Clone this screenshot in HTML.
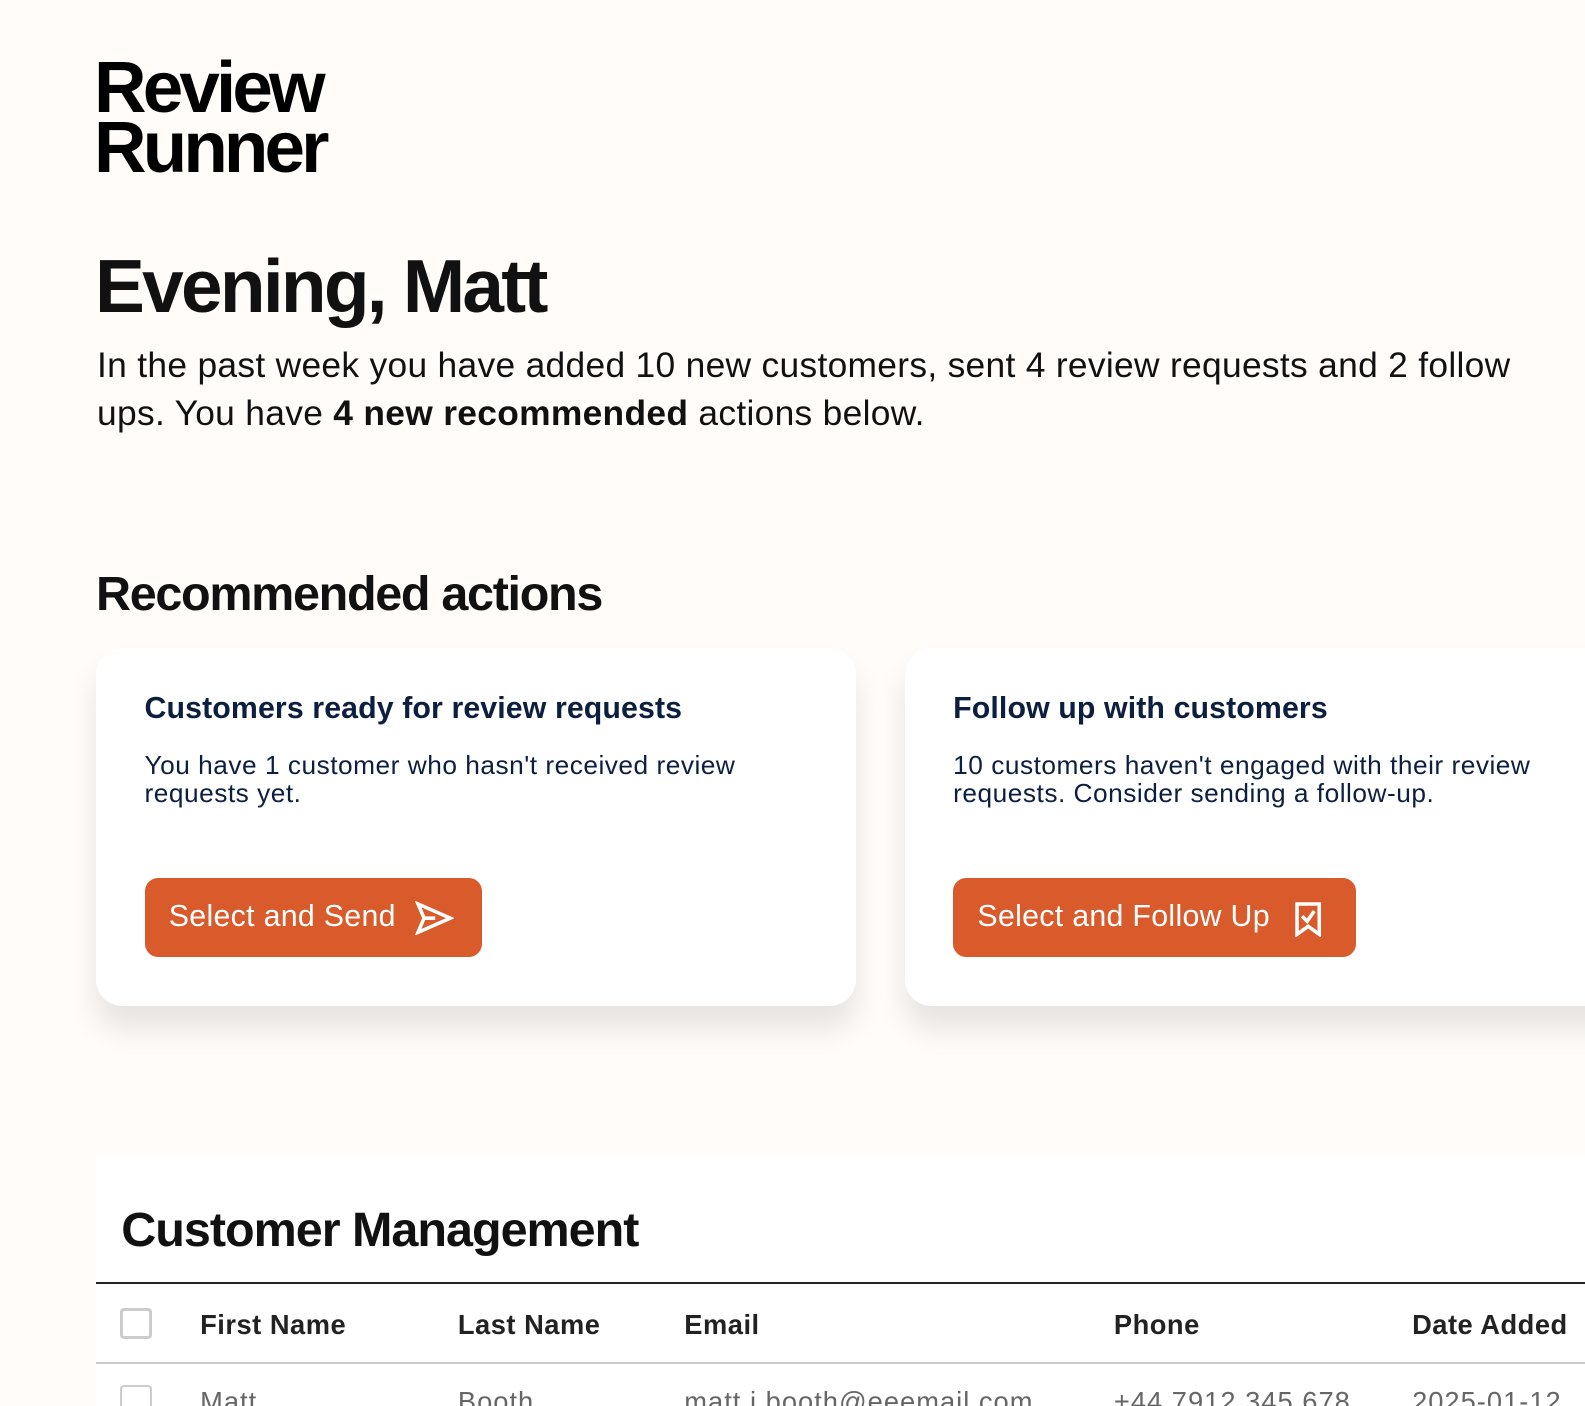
<!DOCTYPE html>
<html><head><meta charset="utf-8"><style>
*{margin:0;padding:0;box-sizing:border-box}
html,body{width:1585px;height:1406px;overflow:hidden;background:#fffcf9}
#w{position:relative;width:1570px;height:1400px;zoom:1.0108;font-family:"Liberation Sans",sans-serif;color:#111}
.a{position:absolute;white-space:nowrap}
.logo{left:93px;top:57px;font-size:72px;font-weight:bold;line-height:60px;letter-spacing:-3.8px;color:#000}
.h1{left:94px;top:240px;font-size:74px;font-weight:bold;letter-spacing:-2.7px;color:#111}
.p{left:96px;top:338px;font-size:35px;line-height:48px;color:#111;letter-spacing:0.3px}
.h2{left:95px;top:560px;font-size:48px;font-weight:bold;letter-spacing:-1.3px}
.card{position:absolute;top:641px;height:354px;background:#fff;border-radius:26px;box-shadow:0 22px 30px rgba(0,0,0,0.10)}
.ct{position:absolute;left:48px;top:44px;font-size:30px;font-weight:bold;color:#0d1f3f;letter-spacing:0.1px;white-space:nowrap}
.cb{position:absolute;left:48px;top:102px;font-size:26px;line-height:28px;color:#0d1f3f;letter-spacing:0.5px}
.btn{position:absolute;left:48px;top:228px;height:78px;background:#d95a2b;border-radius:13px;color:#fff;font-size:30px;line-height:78px;padding-left:24px;white-space:nowrap;letter-spacing:0.3px}
.btn svg{position:absolute;top:22px}
.sec{position:absolute;left:95px;top:1145px;width:1490px;height:261px;background:#fff}
.h3{left:25px;top:44px;font-size:48px;font-weight:bold;letter-spacing:-1px}
.th{top:150px;font-size:27px;font-weight:bold;color:#222;letter-spacing:0.5px}
.td{top:226px;font-size:27px;color:#666;letter-spacing:1px}
.cbx{position:absolute;left:24px;width:31px;height:31px;border:3px solid #ccc;border-radius:4px}
</style></head><body><div id="w">
<div class="a logo">Review<br>Runner</div>
<div class="a h1">Evening, Matt</div>
<div class="a p">In the past week you have added 10 new customers, sent 4 review requests and 2 follow<br>ups. You have <b>4 new recommended</b> actions below.</div>
<div class="a h2">Recommended actions</div>
<div class="card" style="left:95px;width:752px">
 <div class="ct">Customers ready for review requests</div>
 <div class="cb">You have 1 customer who hasn't received review<br>requests yet.</div>
 <div class="btn" style="width:334px">Select and Send
  <svg style="left:268px" width="38" height="34" viewBox="0 0 38 34"><path d="M3 3 L35 17 L3 31 L9 17 Z M9 17 H20" fill="none" stroke="#fff" stroke-width="3.5" stroke-linejoin="miter"/></svg></div>
</div>
<div class="card" style="left:895px;width:720px">
 <div class="ct">Follow up with customers</div>
 <div class="cb">10 customers haven't engaged with their review<br>requests. Consider sending a follow-up.</div>
 <div class="btn" style="width:399px">Select and Follow Up
  <svg style="left:336px" width="32" height="36" viewBox="0 0 32 36"><path d="M4 3 H26 V33 L15 25 L4 33 Z" fill="none" stroke="#fff" stroke-width="3.5"/><path d="M9 15 L14 20 L21 10" fill="none" stroke="#fff" stroke-width="3.5"/></svg></div>
</div>
<div class="sec">
 <div class="a h3">Customer Management</div>
 <div style="position:absolute;left:0;top:123px;width:100%;height:2px;background:#222"></div>
 <div class="cbx" style="top:149px"></div>
 <div class="a th" style="left:103px">First Name</div>
 <div class="a th" style="left:358px">Last Name</div>
 <div class="a th" style="left:582px">Email</div>
 <div class="a th" style="left:1007px">Phone</div>
 <div class="a th" style="left:1302px">Date Added</div>
 <div style="position:absolute;left:0;top:202px;width:100%;height:2px;background:#ccc"></div>
 <div class="cbx" style="top:225px;border-width:2px"></div>
 <div class="a td" style="left:103px">Matt</div>
 <div class="a td" style="left:358px">Booth</div>
 <div class="a td" style="left:582px">matt.j.booth@eeemail.com</div>
 <div class="a td" style="left:1007px">+44 7912 345 678</div>
 <div class="a td" style="left:1302px">2025-01-12</div>
</div>
</div></body></html>
